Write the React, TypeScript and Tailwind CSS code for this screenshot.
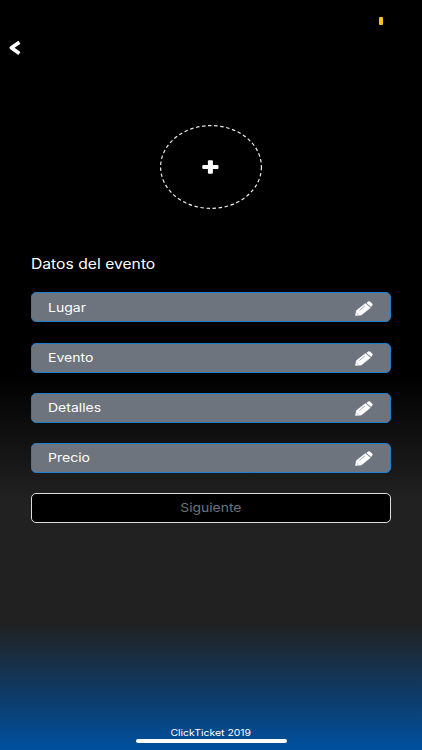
const fields = ['Lugar', 'Evento', 'Detalles', 'Precio'];

function PencilIcon() {
  return (
    <svg viewBox="0 0 18 15" className="mt-[2px] h-[15px] w-[18px]" fill="none">
      <path d="M.5 14.6 1.4 9.6 10.4 2.5 15.4 6.8 6.3 14Z" fill="#fff" stroke="#fff" strokeWidth=".5" strokeLinejoin="round" />
      <path d="M11.4 1.9 13.2.6Q14.2-.1 15.2.7L17.3 2.7Q18.1 3.6 17.2 4.5L16.1 5.9Z" fill="#fff" />
      <path d="M4.3 9.5 10 4.9" stroke="#6d747d" strokeWidth=".6" />
      <path d="M1.8 12.3 3.3 13.6" stroke="#6d747d" strokeWidth=".6" />
    </svg>
  );
}

function Field({ label }: { label: string }) {
  return (
    <button className="flex h-[30px] w-full items-center justify-between rounded-[5px] border border-[#1f7fcd] bg-[#6d747d] px-[17px]">
      <span className="mt-px -ml-px origin-left scale-x-[1.15] text-[12.2px] leading-4 text-white">{label}</span>
      <PencilIcon />
    </button>
  );
}

export default function App() {
  return (
    <main className="flex h-[750px] w-[422px] flex-col overflow-hidden bg-[linear-gradient(to_bottom,#000_50%,#212121_66.6%,#212121_83.3%,#00509f_100%)] font-['Inter',sans-serif] text-white">
      <header className="flex h-[125px] flex-col">
        <span className="mt-[17px] mr-[39px] h-[8px] w-[4px] self-end rounded-[1px] bg-[#f9c515]" />
        <button className="mt-[15px] ml-[9px] h-[16px] w-[13px]" aria-label="Volver">
          <svg viewBox="0 0 13 16" className="h-full w-full" fill="none">
            <path d="M10.4 2.2 2.4 7.8 10.4 13.6" stroke="#fff" strokeWidth="3.7" strokeLinejoin="round" />
          </svg>
        </button>
      </header>

      <button className="grid h-[84px] w-[102px] place-items-center self-center" aria-label="Agregar imagen">
        <svg viewBox="0 0 102 84" className="col-start-1 row-start-1 h-[84px] w-[102px]" fill="none">
          <ellipse cx="51" cy="42" rx="50.4" ry="41.4" stroke="#eee" strokeWidth="1.2" strokeDasharray="3.5 2.6" />
        </svg>
        <svg viewBox="0 0 17 14" className="col-start-1 row-start-1 mr-[2px] h-[14px] w-[17px]" fill="#fff">
          <rect x=".3" y="4.9" width="16.2" height="4.2" rx="1" />
          <rect x="5.9" y=".3" width="5" height="13.4" rx="1" />
        </svg>
      </button>

      <section className="mt-[45px] ml-[31px] w-[360px]">
        <h1 className="block w-fit origin-left scale-x-[1.12] text-[14px] leading-5 whitespace-nowrap">Datos del evento</h1>
        <div className="mt-[18.4px] flex flex-col gap-[20.15px]">
          {fields.map(label => (
            <Field key={label} label={label} />
          ))}
          <button className="flex h-[30px] w-full items-center justify-center rounded-[5px] border border-[#ddd] bg-black">
            <span className="scale-x-[1.14] text-[12.2px] leading-4 text-[#6d747d]">Siguiente</span>
          </button>
        </div>
      </section>

      <footer className="mt-auto flex flex-col items-center">
        <span className="mr-px scale-x-[1.16] text-[9px] leading-3">ClickTicket 2019</span>
        <span className="mb-[7px] h-[4px] w-[151px] rounded-full bg-white" />
      </footer>
    </main>
  );
}
